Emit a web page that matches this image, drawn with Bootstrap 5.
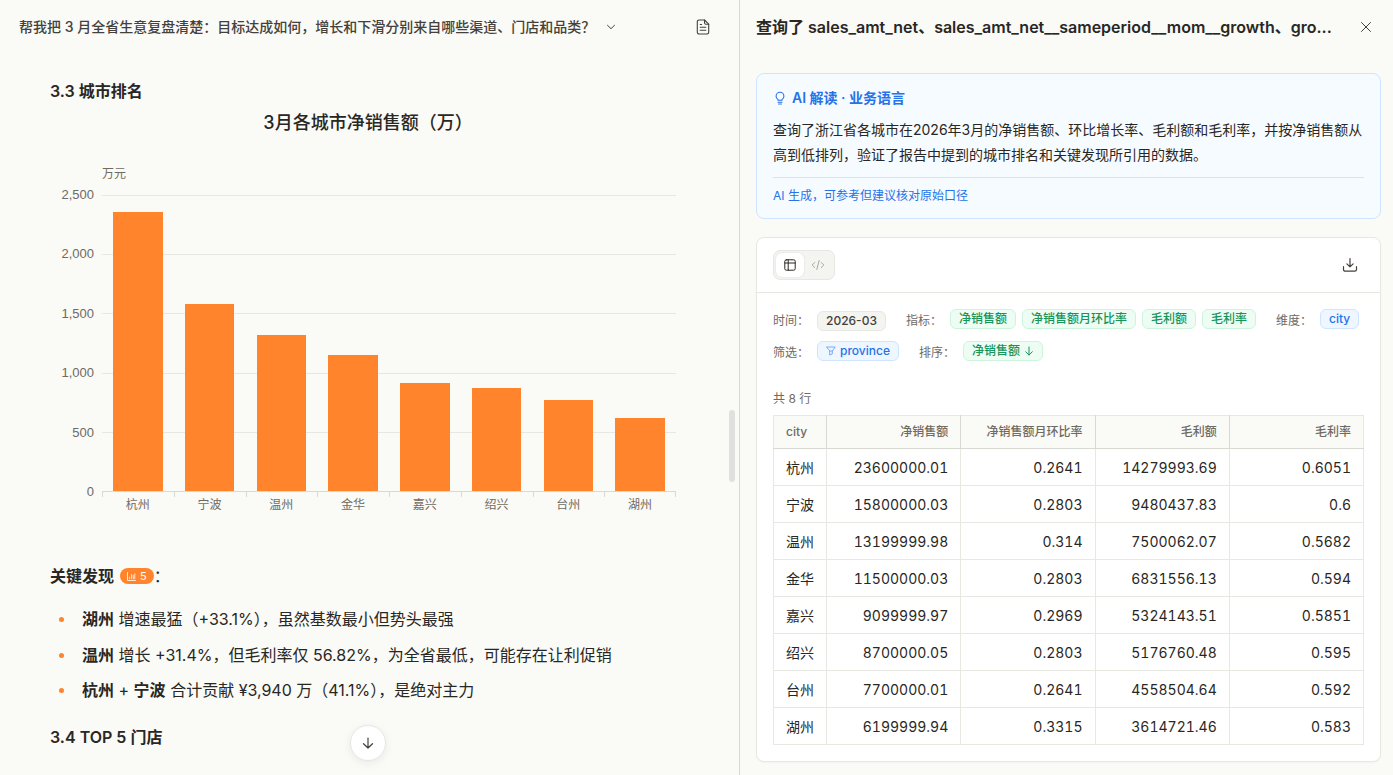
<!DOCTYPE html>
<html lang="zh-CN">
<head>
<meta charset="utf-8">
<meta name="viewport" content="width=device-width, initial-scale=1">
<title>3 月全省生意复盘</title>
<link href="https://cdn.jsdelivr.net/npm/bootstrap@5.3.0/dist/css/bootstrap.min.css" rel="stylesheet">
<style>
  :root {
    --ink: #292724;
    --ink-soft: #44413c;
    --muted: #6f6a62;
    --line: #e8e8e2;
    --line-strong: #d9d9d3;
    --paper: #fafaf6;
    --orange: #ff842b;
    --blue: #2672e8;
    --green: #16945a;
  }
  body {
    font-family: Inter, "Noto Sans CJK SC", sans-serif;
    font-size: 14px;
    color: var(--ink);
    background: var(--paper);
  }
  svg { display: block; fill: none; stroke: currentColor; stroke-linecap: round; stroke-linejoin: round; }
  .workspace { display: grid; grid-template-columns: 740fr 653fr; height: 100vh; }
  .pane { min-width: 0; min-height: 0; overflow: hidden; }
  .pane-left { border-right: 1px solid var(--line-strong); }
  .pane-bar { height: 54px; padding: 0 20px 0 19px; }
  .icon-btn { padding: 4px; color: var(--ink-soft); line-height: 1; border: 0; }
  .topic { color: var(--ink-soft); font-size: 14px; font-weight: 500; line-height: 22px; padding: 0; border: 0; gap: 10px; }

  .report { padding: 24px 53px 0 50px; }
  .section-title { font-size: 16px; font-weight: 600; line-height: 26px; margin: 0; }
  .chart-title { font-size: 18px; font-weight: 500; line-height: 26px; margin: 6px 0 0; }
  .chart-text { font-size: 12px; line-height: 16px; color: var(--muted); }
  .chart { display: grid; grid-template-columns: 44px 1fr; column-gap: 8px; padding-right: 10px; margin-top: 30px; }
  .chart-unit { grid-column: 2; margin-bottom: 5px; }
  .y-axis { font-family: "Liberation Sans", "Noto Sans CJK SC", sans-serif; font-size: 13px; height: 313px; margin: 0 0 -8px; text-align: right; }
  .plot { display: grid; height: 297px; margin-top: 8px; }
  .plot > * { grid-area: 1 / 1; min-height: 0; }
  .grid-line { height: 1px; background: #e8e8e2; }
  .grid-line:last-child { background: var(--line-strong); }
  .bars { display: grid; grid-template-columns: repeat(8, 1fr); height: 296px; align-items: end; justify-items: center; z-index: 1; }
  .bar-item { width: 69%; background: var(--orange); }
  .x-axis { grid-column: 2; display: grid; grid-template-columns: repeat(8, 1fr); text-align: center; }
  .x-axis span { padding-top: 5px; background: linear-gradient(var(--line-strong), var(--line-strong)) 0 0 / 1px 5px no-repeat; }
  .x-axis span:last-child { background: linear-gradient(var(--line-strong), var(--line-strong)) 0 0 / 1px 5px no-repeat, linear-gradient(var(--line-strong), var(--line-strong)) 100% 0 / 1px 5px no-repeat; }

  .findings-title { margin-top: 50px; gap: 6px; }
  .findings-title .fw-normal { margin-left: -6px; }
  .ref-pill { background: var(--orange); color: #fff; border: 0; border-radius: 8px; height: 16px; padding: 0 7px; font-size: 11px; line-height: 16px; }
  .findings { font-size: 16px; line-height: 26px; list-style: none; padding: 0; margin: 17px 0 21px; }
  .findings li { display: flex; align-items: center; margin-bottom: 10px; }
  .findings li:nth-child(2) { margin-bottom: 9px; }
  .findings li::before { content: ""; width: 5px; height: 5px; border-radius: 50%; background: var(--orange); margin: 0 18px 0 9px; }
  .findings b { font-weight: 600; }
  .findings span { white-space: pre-wrap; }
  .scroll-down { left: 0; right: 4px; bottom: 14px; margin: 0 auto; width: 36px; height: 36px; border-radius: 50%; background: #fff; border: 1px solid var(--line); box-shadow: 0 2px 10px rgba(0,0,0,.07); color: var(--ink-soft); padding: 0; }
  .scroll-thumb { right: 4px; top: 410px; width: 6px; height: 72px; border-radius: 3px; background: #e0e0de; }

  .panel-title { font-size: 16px; font-weight: 600; line-height: 24px; margin: 0; }
  .side-body { padding: 19px 12px 0 16px; }
  .insight { background: #f6fbff; border: 1px solid #cfe5ff; border-radius: 8px; padding: 12px 16px; }
  .insight-title { color: var(--blue); font-size: 14px; font-weight: 600; line-height: 24px; margin: 0 0 7px; gap: 5px; }
  .insight p { line-height: 25px; margin: 0 0 10px; }
  .insight-note { border-top: 1px solid #cfe5ff; padding-top: 8px; font-size: 12px; line-height: 20px; color: var(--blue); }
  .result { background: #fff; border: 1px solid var(--line); border-radius: 8px; margin-top: 18px; padding-bottom: 16px; box-shadow: 0 1px 2px rgba(0,0,0,.03); }
  .result-bar { border-bottom: 1px solid var(--line); padding: 12px 22px 12px 16px; height: 55px; }
  .view-switch { background: #f4f4f0; border: 1px solid var(--line); border-radius: 7px; padding: 2px; }
  .view-switch .btn { width: 28px; height: 24px; padding: 0; border: 0; border-radius: 6px; color: #aaa7a0; }
  .view-switch .btn.active { background: #fff; color: var(--ink); box-shadow: 0 0 2px rgba(0,0,0,.12); }
  .query { padding: 16px 16px 0; }
  .query-row { display: flex; height: 32px; align-items: start; }
  .query-group { display: flex; align-items: start; margin-right: 20px; }
  .query-label { font-size: 12px; line-height: 24px; color: var(--muted); width: 44px; }
  .tag { font-size: 12px; font-weight: 500; line-height: 18px; height: 20px; border: 1px solid; border-radius: 6px; padding: 0 8px; margin-right: 6px; display: flex; align-items: center; gap: 4px; white-space: nowrap; }
  .tag:last-child { margin-right: 0; }
  .tag-time { background: #f4f4f0; border-color: var(--line); color: var(--ink-soft); margin-top: 2px; }
  .tag-green { background: #edfdf4; border-color: #cdf5dd; color: var(--green); }
  .tag-blue { background: #eef6ff; border-color: #cfe5ff; color: var(--blue); }
  .tag-blue svg { opacity: .7; }
  .row-count { font-size: 12px; line-height: 18px; color: var(--muted); margin: 17px 0 7px; }
  .data-table { table-layout: fixed; width: 100%; border-collapse: collapse; font-variant-numeric: tabular-nums; }
  .data-table th, .data-table td { border: 1px solid var(--line); padding: 0 12px; text-align: right; white-space: nowrap; }
  .data-table th:first-child, .data-table td:first-child { text-align: left; }
  .data-table th { height: 33px; font-size: 12px; font-weight: 500; color: var(--muted); background: var(--paper); border-right-color: var(--line-strong); border-bottom-color: var(--line-strong); }
  .data-table th:last-child { border-right-color: var(--line); }
  .data-table td { height: 37px; font-size: 14px; }
  .col-city { width: 53px; }
</style>
</head>
<body>
<main class="workspace">
  <section class="pane pane-left position-relative">
    <header class="pane-bar d-flex align-items-center justify-content-between">
      <button type="button" class="btn topic d-flex align-items-center">
        <span>帮我把 3 月全省生意复盘清楚：目标达成如何，增长和下滑分别来自哪些渠道、门店和品类？</span>
        <svg width="12" height="12" viewBox="0 0 12 12"><path d="M2.500 4.300 6 7.700l3.500-3.400"/></svg>
      </button>
      <button type="button" class="btn icon-btn p-1 me-1" aria-label="文档">
        <svg width="16" height="16" viewBox="0 0 16 16" stroke-width="1.100"><path d="M9.500 1H4a1.700 1.700 0 0 0-1.700 1.700v10.600A1.700 1.700 0 0 0 4 15h8a1.700 1.700 0 0 0 1.700-1.700V5.200z"/><path d="M9.500 1v2.800c0 .8.600 1.400 1.400 1.400h2.800M5.200 5.500h1.400M5.200 8.300h5.600M5.200 11.300h5.600"/></svg>
      </button>
    </header>
    <article class="report">
      <h2 class="section-title">3.3 城市排名</h2>
      <h3 class="chart-title text-center">3月各城市净销售额（万）</h3>
      <div class="chart chart-text">
        <div class="chart-unit">万元</div>
        <div class="y-axis d-flex flex-column justify-content-between">
          <span>2,500</span><span>2,000</span><span>1,500</span><span>1,000</span><span>500</span><span>0</span>
        </div>
        <div class="plot">
          <div class="d-flex flex-column justify-content-between">
            <div class="grid-line"></div><div class="grid-line"></div><div class="grid-line"></div><div class="grid-line"></div><div class="grid-line"></div><div class="grid-line"></div>
          </div>
          <div class="bars">
            <div class="bar-item" style="height:94.4%"></div>
            <div class="bar-item" style="height:63.2%"></div>
            <div class="bar-item" style="height:52.8%"></div>
            <div class="bar-item" style="height:46%"></div>
            <div class="bar-item" style="height:36.4%"></div>
            <div class="bar-item" style="height:34.8%"></div>
            <div class="bar-item" style="height:30.8%"></div>
            <div class="bar-item" style="height:24.8%"></div>
          </div>
        </div>
        <div class="x-axis">
          <span>杭州</span><span>宁波</span><span>温州</span><span>金华</span><span>嘉兴</span><span>绍兴</span><span>台州</span><span>湖州</span>
        </div>
      </div>
      <h3 class="section-title findings-title d-flex align-items-center">关键发现
        <button type="button" class="ref-pill d-flex align-items-center gap-1">
          <svg width="9" height="9" viewBox="0 0 9 9" stroke-width=".8"><path d="M.5.5v8h8M2.700 6.800V5M4.600 6.800V2.500M6.300 6.800V3.500M7.800 6.800V1.500"/></svg>5
        </button><span class="fw-normal">：</span>
      </h3>
      <ul class="findings">
        <li><span><b>湖州</b> 增速最猛（+33.1%），虽然基数最小但势头最强</span></li>
        <li><span><b>温州</b> 增长 +31.4%，但毛利率仅 56.82%，为全省最低，可能存在让利促销</span></li>
        <li><span><b>杭州</b> + <b>宁波</b> 合计贡献 ¥3,940 万（41.1%），是绝对主力</span></li>
      </ul>
      <h2 class="section-title">3.4 TOP 5 门店</h2>
    </article>
    <div class="scroll-thumb position-absolute"></div>
    <button type="button" class="btn scroll-down position-absolute d-flex align-items-center justify-content-center" aria-label="滚动到底部">
      <svg width="14" height="14" viewBox="0 0 14 14" stroke-width="1.200"><path d="M7 2v10M2.500 7.700 7 12l4.500-4.300"/></svg>
    </button>
  </section>

  <aside class="pane">
    <header class="pane-bar d-flex align-items-center justify-content-between px-3">
      <h1 class="panel-title text-nowrap">查询了 sales_amt_net、sales_amt_net__sameperiod__mom__growth、gro...</h1>
      <button type="button" class="btn icon-btn" aria-label="关闭">
        <svg width="14" height="14" viewBox="0 0 14 14"><path d="m2.500 2.500 9 9m0-9-9 9"/></svg>
      </button>
    </header>
    <div class="side-body">
      <section class="insight">
        <h2 class="insight-title d-flex align-items-center">
          <svg width="14" height="14" viewBox="0 0 14 14" stroke-width="1.100"><path d="M5 9.300V8.500C3.800 7.800 3.100 6.600 3.100 5.200a3.900 3.900 0 0 1 7.800 0c0 1.400-.7 2.600-1.900 3.300v.8zM5 11.200h4M5.600 13h2.800"/></svg>
          <span>AI 解读 · 业务语言</span>
        </h2>
        <p>查询了浙江省各城市在2026年3月的净销售额、环比增长率、毛利额和毛利率，并按净销售额从高到低排列，验证了报告中提到的城市排名和关键发现所引用的数据。</p>
        <div class="insight-note">AI 生成，可参考但建议核对原始口径</div>
      </section>

      <section class="result">
        <div class="result-bar d-flex align-items-center justify-content-between">
          <div class="view-switch d-flex" role="group" aria-label="视图">
            <button type="button" class="btn active d-flex align-items-center justify-content-center" aria-label="表格">
              <svg width="12" height="12" viewBox="0 0 12 12"><rect x=".8" y=".8" width="10.400" height="10.400" rx="1.500"/><path d="M.8 4h10.400M4.200.8v10.400"/></svg>
            </button>
            <button type="button" class="btn d-flex align-items-center justify-content-center" aria-label="代码">
              <svg width="14" height="12" viewBox="0 0 14 12"><path d="M3.700 3.500 1.200 6l2.500 2.500M10.300 3.500 12.800 6l-2.500 2.500M8.200 1.500l-2.400 9"/></svg>
            </button>
          </div>
          <button type="button" class="btn icon-btn p-0" aria-label="下载">
            <svg width="16" height="16" viewBox="0 0 16 16" stroke-width="1.200"><path d="M8 1.500v8.300M4.900 6.800 8 9.900l3.100-3.100M1.500 9.500v3a1.700 1.700 0 0 0 1.700 1.700h9.600a1.700 1.700 0 0 0 1.700-1.700v-3"/></svg>
          </button>
        </div>
        <div class="query">
          <div class="query-row">
            <div class="query-group"><span class="query-label">时间：</span><span class="tag tag-time">2026-03</span></div>
            <div class="query-group"><span class="query-label">指标：</span><span class="tag tag-green">净销售额</span><span class="tag tag-green">净销售额月环比率</span><span class="tag tag-green">毛利额</span><span class="tag tag-green">毛利率</span></div>
            <div class="query-group me-0"><span class="query-label">维度：</span><span class="tag tag-blue">city</span></div>
          </div>
          <div class="query-row">
            <div class="query-group"><span class="query-label">筛选：</span><span class="tag tag-blue"><svg width="10" height="10" viewBox="0 0 10 10" stroke-width=".8"><path d="M.8 1h8.400L6.300 5v3L3.700 9V5zM3.700 5h2.600"/></svg>province</span></div>
            <div class="query-group"><span class="query-label">排序：</span><span class="tag tag-green">净销售额<svg width="10" height="10" viewBox="0 0 10 10"><path d="M5 1v8M1.700 5.800 5 9l3.300-3.200"/></svg></span></div>
          </div>
          <div class="row-count">共 8 行</div>
          <table class="data-table">
            <colgroup><col class="col-city"><col><col><col><col></colgroup>
            <thead><tr><th>city</th><th>净销售额</th><th>净销售额月环比率</th><th>毛利额</th><th>毛利率</th></tr></thead>
            <tbody>
              <tr><td>杭州</td><td>23600000.01</td><td>0.2641</td><td>14279993.69</td><td>0.6051</td></tr>
              <tr><td>宁波</td><td>15800000.03</td><td>0.2803</td><td>9480437.83</td><td>0.6</td></tr>
              <tr><td>温州</td><td>13199999.98</td><td>0.314</td><td>7500062.07</td><td>0.5682</td></tr>
              <tr><td>金华</td><td>11500000.03</td><td>0.2803</td><td>6831556.13</td><td>0.594</td></tr>
              <tr><td>嘉兴</td><td>9099999.97</td><td>0.2969</td><td>5324143.51</td><td>0.5851</td></tr>
              <tr><td>绍兴</td><td>8700000.05</td><td>0.2803</td><td>5176760.48</td><td>0.595</td></tr>
              <tr><td>台州</td><td>7700000.01</td><td>0.2641</td><td>4558504.64</td><td>0.592</td></tr>
              <tr><td>湖州</td><td>6199999.94</td><td>0.3315</td><td>3614721.46</td><td>0.583</td></tr>
            </tbody>
          </table>
        </div>
      </section>
    </div>
  </aside>
</main>
<script src="https://cdn.jsdelivr.net/npm/bootstrap@5.3.0/dist/js/bootstrap.bundle.min.js"></script>
</body>
</html>
